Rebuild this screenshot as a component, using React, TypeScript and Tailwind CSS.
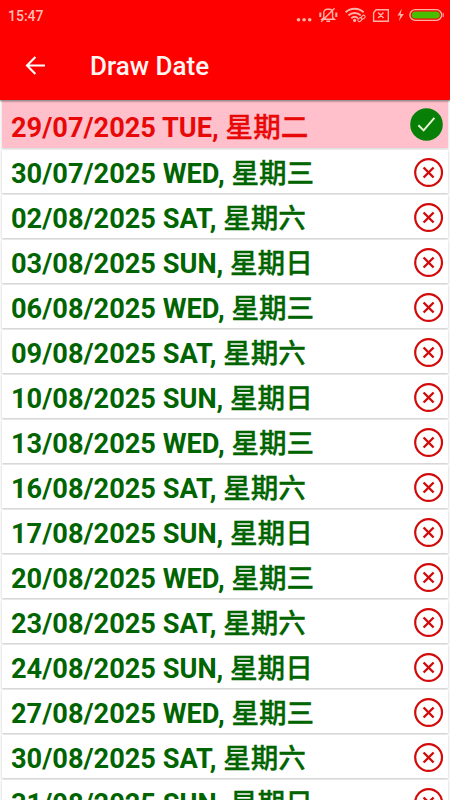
interface DrawDate {
  date: string;
  day: string;
  zh: string;
}

const DRAW_DATES: DrawDate[] = [
  { date: '29/07/2025', day: 'TUE', zh: '星期二' },
  { date: '30/07/2025', day: 'WED', zh: '星期三' },
  { date: '02/08/2025', day: 'SAT', zh: '星期六' },
  { date: '03/08/2025', day: 'SUN', zh: '星期日' },
  { date: '06/08/2025', day: 'WED', zh: '星期三' },
  { date: '09/08/2025', day: 'SAT', zh: '星期六' },
  { date: '10/08/2025', day: 'SUN', zh: '星期日' },
  { date: '13/08/2025', day: 'WED', zh: '星期三' },
  { date: '16/08/2025', day: 'SAT', zh: '星期六' },
  { date: '17/08/2025', day: 'SUN', zh: '星期日' },
  { date: '20/08/2025', day: 'WED', zh: '星期三' },
  { date: '23/08/2025', day: 'SAT', zh: '星期六' },
  { date: '24/08/2025', day: 'SUN', zh: '星期日' },
  { date: '27/08/2025', day: 'WED', zh: '星期三' },
  { date: '30/08/2025', day: 'SAT', zh: '星期六' },
  { date: '31/08/2025', day: 'SUN', zh: '星期日' },
];

function StatusIcons() {
  return (
    <svg className="mt-[5px] h-5 w-[150px] text-[#ffb3a8]" viewBox="0 0 150 20" fill="none" stroke="currentColor" strokeWidth="1.4">
      {/* more notifications */}
      <g fill="currentColor" stroke="none">
        <circle cx="2.5" cy="14.8" r="1.8" />
        <circle cx="8.1" cy="14.8" r="1.8" />
        <circle cx="13.7" cy="14.8" r="1.8" />
      </g>
      {/* muted bell */}
      <path d="M26 14.2h12.4l-1.8-1.8V7.6a3.4 3.4 0 0 0-3.4-3.4h-2a3.4 3.4 0 0 0-3.4 3.4v4.8L26 14.2zM30.3 16.2h3.8M25.2 16.8 38.6 3.2" />
      <path d="M24.3 7.5v4.6M40.3 7.5v4.6" strokeWidth="2" />
      {/* wifi with link */}
      <path d="M49.6 7.3a13.2 13.2 0 0 1 18 0M52.4 10.4a9.2 9.2 0 0 1 12.4 0M55.3 13.3a5 5 0 0 1 6.6 0" strokeWidth="1.9" />
      <circle cx="58.6" cy="15.4" r="1.6" fill="currentColor" stroke="none" />
      <g transform="rotate(-38 65.5 13.4)" strokeWidth="1">
        <rect x="61.3" y="11.9" width="4.6" height="3" rx="1.5" />
        <rect x="65.1" y="11.9" width="4.6" height="3" rx="1.5" />
      </g>
      {/* no sim */}
      <path d="M80.1 4.7h12.2v11.6H77.6V7.8zM82.1 7.6l5.4 5.4M87.5 7.6l-5.4 5.4" />
      {/* charging */}
      <path d="M105.8 3.8 101.5 10.6h2.8l-1.5 5.6 5-7.1h-3.1z" fill="currentColor" stroke="none" />
      <rect x="113.9" y="4.6" width="31.8" height="10.8" rx="5.4" />
      <rect x="115.8" y="6.4" width="28" height="7.2" rx="3.6" fill="#49bd00" stroke="none" />
      <path d="M147.2 8v4" strokeWidth="1" />
    </svg>
  );
}

function CheckIcon() {
  return (
    <svg className="h-[33px] w-[33px]" viewBox="0 0 33 33" fill="none">
      <circle cx="16.5" cy="16.5" r="16.3" fill="#088008" />
      <path d="m8.4 17.3 5.2 5.1L24.4 9.8" stroke="#e9f2d2" strokeWidth="2" />
    </svg>
  );
}

function CrossIcon() {
  return (
    <svg className="h-[30px] w-[30px]" viewBox="0 0 30 30" fill="none" stroke="#d20a0a">
      <circle cx="14.6" cy="14.5" r="13.4" strokeWidth="2.2" />
      <path d="m9.6 9.5 10 10M19.6 9.5l-10 10" strokeWidth="2.4" />
    </svg>
  );
}

function DateRow({ item, selected }: { item: DrawDate; selected: boolean }) {
  return (
    <li
      className={`flex shrink-0 items-center justify-between pl-[9px] ${
        selected
          ? 'h-[47px] bg-[#ffc0cb] pr-[5px] text-[#e80808] shadow-[0_1px_2px_rgba(0,0,0,0.15)]'
          : 'h-[43px] bg-white pt-[3px] pr-1 text-[#006400] shadow-[0_1px_2px_rgba(0,0,0,0.2)]'
      }`}
    >
      <span className={`whitespace-pre text-[27.2px] leading-none ${selected ? 'pt-[7px]' : 'pt-[2px]'}`}>
        <span className="font-bold">{`${item.date} ${item.day}, `}</span>
        <span className="text-[27.6px] font-medium [-webkit-text-stroke:0.3px_currentColor]">{item.zh}</span>
      </span>
      {selected ? <CheckIcon /> : <CrossIcon />}
    </li>
  );
}

export default function App() {
  return (
    <div className="flex h-[800px] w-[450px] flex-col overflow-hidden bg-[#fafafa] font-['Roboto','Noto_Sans_CJK_SC',sans-serif]">
      <header className="relative h-[100px] shrink-0 bg-[#ff0000] shadow-[0_1px_2px_rgba(0,0,0,0.6)]">
        <div className="flex h-[31px] justify-between pl-2 pr-[4px]">
          <span className="pt-[7px] text-[14px] font-medium leading-[18px] text-[#ffbdb5]">15:47</span>
          <StatusIcons />
        </div>
        <div className="flex h-[69px] items-center pl-[25px]">
          <svg className="h-5 w-5" viewBox="0 0 20 20" fill="none" stroke="white" strokeWidth="2.1">
            <path d="M20 9.5H2M10.4 1 2 9.5l8.4 8.5" />
          </svg>
          <h1 className="ml-[45px] pt-px text-[26px] font-medium leading-none text-[#fff5f2]">Draw Date</h1>
        </div>
      </header>
      <ul className="flex flex-col gap-[2px] px-0.5 pt-px">
        {DRAW_DATES.map((item, i) => (
          <DateRow key={item.date} item={item} selected={i === 0} />
        ))}
      </ul>
    </div>
  );
}
